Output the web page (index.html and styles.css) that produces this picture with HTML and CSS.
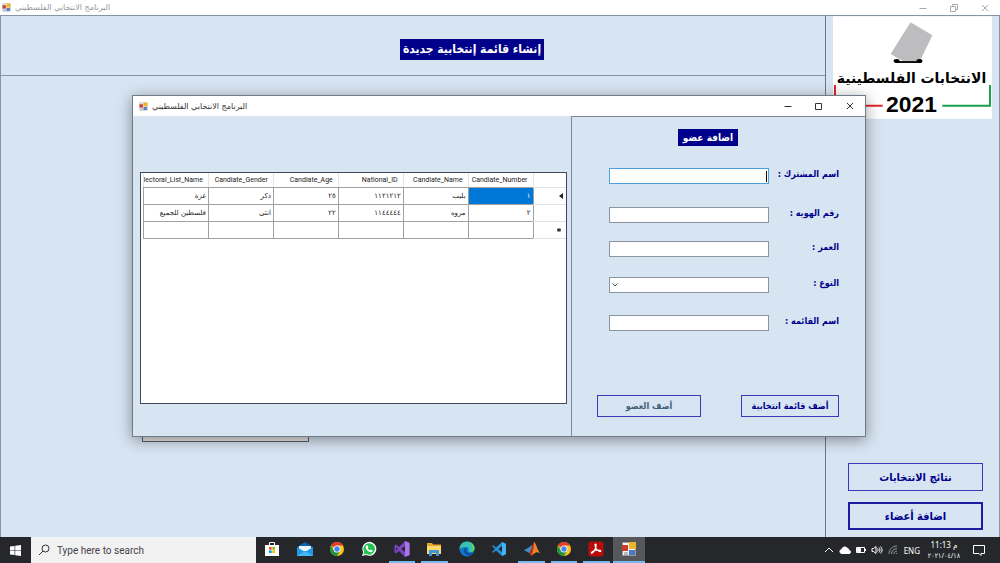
FILE: index.html
```html
<!DOCTYPE html>
<html lang="ar">
<head>
    <meta charset="UTF-8">
    <meta name="viewport" content="width=device-width, initial-scale=1.0">
    <title>البرنامج الانتخابي الفلسطيني</title>
    <link rel="stylesheet" href="styles.css">
</head>
<body>
    <!-- shared icons -->
    <svg class="defs" width="0" height="0">
        <symbol id="app" viewBox="0 0 16 16">
            <path fill="#f6f6f6" stroke="#999" d="M1.5 1.500h13v13h-13z"/>
            <path fill="#c8402c" d="M1 4h6v6H1z"/>
            <path fill="#f0b429" d="M8 1h7v7H8z"/>
            <path fill="#4a78d0" d="M8 9h6v5H8z"/>
            <path fill="#bbb" d="M3 11h4v3H3z"/>
        </symbol>
        <symbol id="min" viewBox="0 0 10 10"><path d="M1.500 5.500h7"/></symbol>
        <symbol id="max" viewBox="0 0 10 10"><path d="M1.500 2.500h6v6h-6z"/></symbol>
        <symbol id="restore" viewBox="0 0 10 10"><path d="M1.500 3.500h5v5h-5zM3.500 3.500v-2h5v5h-2"/></symbol>
        <symbol id="close" viewBox="0 0 10 10"><path d="M2 2l6 6M8 2l-6 6"/></symbol>
        <symbol id="chrome" viewBox="0 0 16 16">
            <circle cx="8" cy="8" r="7" fill="#fbc116"/>
            <path fill="#e33b2e" d="M8 8L1.900 4.500A7 7 0 0 1 14.100 4.500H8z"/>
            <path fill="#229342" d="M1.900 4.500A7 7 0 0 0 8 15l3-5.200L8 8 5 9.800z"/>
            <circle cx="8" cy="8" r="3.500" fill="#fff"/>
            <circle cx="8" cy="8" r="2.700" fill="#4285f4"/>
        </symbol>
    </svg>

    <div class="main-window">
        <header class="titlebar inactive">
            <svg class="app-icon"><use href="#app"/></svg>
            <span class="title" dir="rtl">البرنامج الانتخابي الفلسطيني</span>
            <button class="win-btn" aria-label="Minimize"><svg><use href="#min"/></svg></button>
            <button class="win-btn" aria-label="Restore"><svg><use href="#restore"/></svg></button>
            <button class="win-btn" aria-label="Close"><svg><use href="#close"/></svg></button>
        </header>
        <div class="main-body">
            <main class="workspace">
                <div class="page-header">
                    <h1 class="tag tag-large" dir="rtl">إنشاء قائمة إنتخابية جديدة</h1>
                </div>
                <div class="list-box"></div>
            </main>
            <aside class="sidebar">
                <svg class="logo" viewBox="0 0 160 103">
                    <path fill="#fff" d="M0 0h160v103H0z"/>
                    <path fill="#bdbdbf" d="M78 6l22 13-13 27H72l-14-8z"/>
                    <path stroke="#111" stroke-width="2" d="M63 46h26"/>
                    <ellipse cx="64" cy="45" rx="3" ry="2"/>
                    <ellipse cx="87" cy="45" rx="3" ry="2"/>
                    <text class="logo-name" x="79" y="67" text-anchor="middle">الانتخابات الفلسطينية</text>
                    <text class="logo-year" x="79" y="96" text-anchor="middle">2021</text>
                    <path fill="none" stroke="#e3242b" stroke-width="2" d="M2 69v21h48"/>
                    <path fill="none" stroke="#16a04f" stroke-width="2" d="M110 90h48V69"/>
                </svg>
                <div class="side-actions" dir="rtl">
                    <button class="btn btn-side">نتائج الانتخابات</button>
                    <button class="btn btn-side current">اضافة أعضاء</button>
                </div>
            </aside>
        </div>
    </div>

    <div class="dialog">
        <header class="titlebar">
            <svg class="app-icon"><use href="#app"/></svg>
            <span class="title" dir="rtl">البرنامج الانتخابي الفلسطيني</span>
            <button class="win-btn" aria-label="Minimize"><svg><use href="#min"/></svg></button>
            <button class="win-btn" aria-label="Maximize"><svg><use href="#max"/></svg></button>
            <button class="win-btn" aria-label="Close"><svg><use href="#close"/></svg></button>
        </header>
        <div class="dialog-body">
            <section class="grid-panel">
                <div class="data-grid">
                    <table dir="rtl">
                        <thead>
                            <tr>
                                <th class="row-head"></th>
                                <th>Candiate_Number</th>
                                <th>Candiate_Name</th>
                                <th>National_ID</th>
                                <th>Candiate_Age</th>
                                <th>Candiate_Gender</th>
                                <th>Electoral_List_Name</th>
                            </tr>
                        </thead>
                        <tbody>
                            <tr>
                                <td class="row-head"><svg viewBox="0 0 6 8"><path d="M5 1v6L1 4z"/></svg></td>
                                <td class="selected">١</td>
                                <td>بليب</td>
                                <td>١١٢١٢١٢</td>
                                <td>٢٥</td>
                                <td>ذكر</td>
                                <td>غزة</td>
                            </tr>
                            <tr>
                                <td class="row-head"></td>
                                <td>٢</td>
                                <td>مروه</td>
                                <td>١١٤٤٤٤٤</td>
                                <td>٢٢</td>
                                <td>انثى</td>
                                <td>فلسطين للجميع</td>
                            </tr>
                            <tr>
                                <td class="row-head"><svg class="new-row" viewBox="0 0 6 8"><path d="M3 2v4M1 3l4 2M5 3l-4 2"/></svg></td>
                                <td></td>
                                <td></td>
                                <td></td>
                                <td></td>
                                <td></td>
                                <td></td>
                            </tr>
                        </tbody>
                    </table>
                </div>
            </section>

            <form class="member-form" dir="rtl">
                <h2 class="tag">اضافة عضو</h2>
                <div class="fields">
                    <label for="memberName">اسم المشترك :</label>
                    <div class="control focused"><input type="text" id="memberName"></div>
                    <label for="memberId">رقم الهويه :</label>
                    <div class="control"><input type="text" id="memberId"></div>
                    <label for="memberAge">العمر :</label>
                    <div class="control"><input type="text" id="memberAge"></div>
                    <label for="memberGender">النوع :</label>
                    <div class="control">
                        <select id="memberGender"><option></option></select>
                        <svg class="chevron" viewBox="0 0 6 4"><path d="M.5.5L3 3 5.500.5"/></svg>
                    </div>
                    <label for="listName">اسم القائمه :</label>
                    <div class="control"><input type="text" id="listName"></div>
                </div>
                <div class="form-actions">
                    <button type="button" class="btn">أضف قائمة انتخابية</button>
                    <button type="button" class="btn btn-wide" disabled>أضف العضو</button>
                </div>
            </form>
        </div>
    </div>

    <footer class="taskbar">
        <button class="start" aria-label="Start">
            <svg viewBox="0 0 12 12"><path fill="#fff" d="M0 1.700l5-.7v4.700H0zM5.700.9L12 0v5.700H5.700zM0 6.300h5V11l-5-.7zM5.700 6.300H12V12l-6.300-.9z"/></svg>
        </button>
        <div class="search">
            <svg viewBox="0 0 12 12"><circle cx="7.500" cy="4.500" r="3.500"/><path d="M5 7L1 11"/></svg>
            <input type="text" placeholder="Type here to search" aria-label="Search">
        </div>
        <nav class="apps">
            <button aria-label="Store">
                <svg viewBox="0 0 16 16"><path fill="none" stroke="#fff" d="M5.500 4V1.500h5V4"/><path fill="#fff" d="M1 4h14v11H1z"/><path fill="#f25022" d="M5 6h2.700v2.700H5z"/><path fill="#7fba00" d="M8.300 6H11v2.700H8.300z"/><path fill="#00a4ef" d="M5 9.300h2.700V12H5z"/><path fill="#ffb900" d="M8.300 9.300H11V12H8.300z"/></svg>
            </button>
            <button aria-label="Mail">
                <svg viewBox="0 0 16 16"><path fill="#0a64b4" d="M0 6l8-5 8 5v8H0z"/><path fill="#f2f6fa" d="M2 5h12v5H2z"/><path fill="#1e9be8" d="M0 6l8 5 8-5v9H0z"/><path fill="#46b8f4" d="M0 15l8-5 8 5z"/></svg>
            </button>
            <button aria-label="Chrome"><svg><use href="#chrome"/></svg></button>
            <button aria-label="WhatsApp">
                <svg viewBox="0 0 16 16"><path fill="#fff" d="M1 15l1.200-3.800A7 7 0 1 1 5 14z"/><path fill="#25c052" d="M2.500 13.500l.8-2.400A5.800 5.800 0 1 1 5.300 13z"/><path fill="#fff" d="M5.500 4.500l1-.2.900 2-.7.900c.5 1 1.200 1.700 2.300 2.100l.8-.9 2 1c0 1.500-1.500 2-2.600 1.700C7 10.500 5 8.500 4.700 6.700c-.1-1 .3-1.800.8-2.200z"/></svg>
            </button>
            <button class="open" aria-label="Visual Studio">
                <svg viewBox="0 0 16 16"><path fill="#7a45c0" d="M11 0l4.500 2v12L11 16 5 10l-3 2.500L.5 11.500v-7L2 3.500 5 6zM2 6.300v3.400L3.700 8zM11 5L7.300 8 11 11z"/><path fill="#a675e6" d="M11 0l4.500 2v12L11 16z"/></svg>
            </button>
            <button class="open" aria-label="File Explorer">
                <svg viewBox="0 0 16 16"><path fill="#e8a92b" d="M1 2h5l1 1.500h8V13H1z"/><path fill="#ffd869" d="M1 5h14v8H1z"/><path fill="#3e97d6" d="M3 9h10v6h-3v-3H6v3H3z"/></svg>
            </button>
            <button aria-label="Edge">
                <svg viewBox="0 0 16 16"><circle cx="8" cy="8" r="7.500" fill="#1577c9"/><path fill="#37c3b4" d="M.5 8C.5 3.500 4 .5 8 .5s7.500 3 7.500 6.500c0 2.500-2 4-4 4-1.500 0-2.500-.7-2-1.500 1-1.500-.2-3.500-2.500-3.500C3.500 6 1.500 7 .5 8z"/><path fill="#0c4e9b" d="M5 8c-1 3 2 7 6.500 6.300 1.300-.5 2.500-1.500 3-2.500-4 1.800-8-.3-7.300-4.300C6.300 7 5.300 7.200 5 8z"/><path fill="#62d64e" d="M11 1.200c3 1.200 4.500 3.500 4.500 6-.3 2.500-2 3.800-4 3.800C15 8 13.500 4 11 1.200z"/></svg>
            </button>
            <button aria-label="Visual Studio Code">
                <svg viewBox="0 0 16 16"><path fill="#2490d8" d="M11 1l4 2v10l-4 2-6-5.500L2.200 11.700 1 11l3-3-3-3 1.200-.7L5 6.500zM11 5L7.500 8l3.500 3z"/><path fill="#45b3f3" d="M11 1l4 2v10l-4 2z"/></svg>
            </button>
            <button class="open" aria-label="MATLAB">
                <svg viewBox="0 0 16 16"><path fill="#3b8fc4" d="M0 9l4-2 4-3 1 3-4 5z"/><path fill="#b5321c" d="M5 12c2-1 3-9 5-11 1 0 1 6 0 9l-3 5z"/><path fill="#f08328" d="M10 1c2 1 3 7 6 11-3-1-4-1-5 0l-4 3c2-3 3-9 3-14z"/></svg>
            </button>
            <button class="open" aria-label="Chrome"><svg><use href="#chrome"/></svg></button>
            <button class="open" aria-label="Acrobat Reader">
                <svg viewBox="0 0 16 16"><rect width="15" height="15" x=".5" y=".5" rx="2" fill="#b90d0a"/><path fill="none" stroke="#fff" stroke-width="1.200" d="M7.500 3c1 0 .7 3-.5 5.500S3.500 13 3.300 12s3-2.600 5.500-2.800 4.200.3 3.900 1S9 9.500 8 7.500 6.800 3 7.500 3z"/></svg>
            </button>
            <button class="open active" aria-label="البرنامج الانتخابي"><svg><use href="#app"/></svg></button>
        </nav>
        <div class="tray">
            <svg viewBox="0 0 12 12"><path d="M2 8l4-4 4 4"/></svg>
            <svg viewBox="0 0 12 12"><path fill="#fff" d="M3 9.500a2 2 0 0 1-.2-4A3 3 0 0 1 8 4a2.700 2.700 0 0 1 2 2.500 1.500 1.500 0 0 1 0 3z"/></svg>
            <svg viewBox="0 0 12 12"><path d="M1.500 3.500h8v5h-8zM10.500 5v2"/><path fill="#fff" d="M2.500 4.500h3v3h-3z"/></svg>
            <svg viewBox="0 0 12 12"><path d="M1 4.500h1.500L5 2.500v7L2.500 7.500H1zM6.500 4.500c.7 1 .7 2 0 3M8 3.500c1.300 1.500 1.300 3.500 0 5M9.500 2.500c2 2 2 5 0 7"/></svg>
            <svg class="dim" viewBox="0 0 12 12"><path d="M2 10C2 5.500 5.500 2 10 2M4.500 10c0-3 2.500-5.500 5.500-5.500M7 10c0-1.700 1.300-3 3-3M9 10l1-1"/></svg>
            <span class="lang">ENG</span>
            <div class="clock"><span>11:13 م</span><span class="date">٢٠٢١/٠٤/١٨</span></div>
            <svg class="note" viewBox="0 0 12 12"><path d="M.5 1.500h11v8H8v2l-2-2H.5z"/></svg>
        </div>
    </footer>
</body>
</html>
```
FILE: styles.css
```css
* {
    box-sizing: border-box;
}
body {
    display: flex;
    flex-direction: column;
    height: 100vh;
    margin: 0;
    overflow: hidden;
    font-family: "DejaVu Sans", sans-serif;
    font-size: 8px;
    background-color: #d7e4f2;
}
button {
    padding: 0;
    border: 0;
    background: none;
    font-family: inherit;
}
svg {
    display: block;
    flex: none;
}
.defs {
    position: absolute;
}

/* windows */
.main-window {
    display: flex;
    flex: 1;
    flex-direction: column;
    min-height: 0;
}
.titlebar {
    display: flex;
    flex: none;
    align-items: center;
    height: 20px;
    padding-left: 6px;
    background-color: #fff;
    color: #333;
}
.titlebar.inactive {
    height: 15px;
    padding-left: 2px;
    color: #999;
}
.app-icon {
    width: 9px;
    height: 9px;
}
.title {
    flex: 1;
    margin-left: 4px;
    font-size: 8px;
    direction: ltr;
}
.win-btn {
    display: flex;
    justify-content: center;
    width: 31px;
}
.win-btn svg {
    width: 10px;
    height: 10px;
    fill: none;
    stroke: currentColor;
}
.titlebar .win-btn {
    color: #333;
}
.titlebar.inactive .win-btn {
    color: #aaa;
}
.main-body {
    display: flex;
    flex: 1;
    border: 1px solid #8794a5;
    border-bottom: 0;
}
.workspace {
    flex: 1;
}
.page-header {
    display: flex;
    align-items: center;
    justify-content: center;
    height: 60px;
    padding: 8px 0 0 118px;
    border-bottom: 1px solid #8794a5;
}
.tag {
    margin: 0;
    padding: 0 5px;
    background-color: #00008b;
    color: #fff;
    font-family: "DejaVu Sans Condensed", "DejaVu Sans", sans-serif;
    font-size: 10px;
    line-height: 17px;
}
.tag-large {
    padding: 0 3px;
    font-size: 12px;
    line-height: 21px;
}
.list-box {
    width: 167px;
    height: 266px;
    margin: 100px 0 0 141px;
    border: 1px solid #555f6b;
    background-color: #ebe6e8;
}
.sidebar {
    display: flex;
    flex-direction: column;
    justify-content: space-between;
    width: 174px;
    padding: 0 7px;
    border-left: 1px solid #6b7887;
}
.logo {
    width: 159px;
    height: 103px;
}
.logo-name {
    font-size: 14px;
    font-weight: bold;
}
.logo-year {
    font-family: "Liberation Sans", sans-serif;
    font-size: 23px;
    font-weight: bold;
}
.side-actions {
    display: flex;
    flex-direction: column;
    gap: 11px;
    padding: 0 9px 7px 15px;
}

/* buttons */
.btn {
    width: 98px;
    height: 22px;
    border: 1px solid #3a3ab8;
    color: #00008b;
    font-family: "DejaVu Sans Condensed", "DejaVu Sans", sans-serif;
    font-size: 9px;
    font-weight: bold;
    white-space: nowrap;
}
.btn:disabled {
    color: #3f6079;
}
.btn-wide {
    width: 104px;
}
.btn-side {
    width: 100%;
    height: 28px;
    font-size: 11px;
}
.btn-side.current {
    border: 2px solid #1c1ca0;
}

/* dialog */
.dialog {
    position: absolute;
    top: 95px;
    left: 132px;
    display: flex;
    flex-direction: column;
    width: 734px;
    height: 342px;
    border: 1px solid #6f7b89;
    background-color: #d7e4f2;
    box-shadow: 0 3px 14px rgba(0, 0, 0, 0.4);
}
.dialog-body {
    display: flex;
    flex: 1;
}
.grid-panel {
    flex: 1;
    padding: 56px 4px 32px 7px;
}
.data-grid {
    height: 100%;
    padding-left: 2px;
    border: 1px solid #3f4854;
    background-color: #fff;
}
table {
    width: 100%;
    border-collapse: collapse;
    table-layout: fixed;
    font-size: 7px;
}
th, td {
    height: 17px;
    padding: 0 2px;
    border: 1px solid #a0a0a0;
    overflow: hidden;
    text-align: right;
    white-space: nowrap;
    color: #222;
}
th {
    height: 14px;
    padding: 0 5px 0 0;
    border-color: #e3e3e3;
    border-top: 0;
    border-bottom-color: #a0a0a0;
    font-family: Roboto, sans-serif;
    font-weight: normal;
}
.row-head {
    width: 33px;
    border-right: 0;
    border-left: 0;
    border-color: #e3e3e3;
}
.row-head svg {
    width: 6px;
    height: 8px;
    fill: #222;
}
.row-head .new-row {
    margin-right: 2px;
    stroke: #222;
}
td.selected {
    background-color: #0078d7;
    color: #fff;
}

/* member form */
.member-form {
    display: flex;
    flex-direction: column;
    align-items: center;
    width: 294px;
    padding: 12px 26px 19px 25px;
    border: 1px solid #7b8999;
    border-right: 0;
    border-bottom: 0;
}
.member-form .tag {
    margin-right: 20px;
}
.fields {
    display: grid;
    grid-template-columns: 1fr 160px;
    grid-template-rows: 39px 34px 36px 38px 16px;
    width: 100%;
    margin-top: 22px;
    padding-left: 12px;
}
.fields label {
    color: #00008b;
    font-family: "DejaVu Sans Condensed", "DejaVu Sans", sans-serif;
    font-size: 9px;
    font-weight: bold;
    line-height: 12px;
    white-space: nowrap;
}
.control {
    position: relative;
    height: 16px;
}
.control input,
.control select {
    display: block;
    width: 100%;
    height: 100%;
    padding: 0 2px;
    border: 1px solid #8b94a0;
    border-radius: 0;
    outline: 0;
    background-color: #fff;
    appearance: none;
}
.control.focused input {
    border-color: #4a9fdc;
}
.control.focused::after {
    position: absolute;
    top: 3px;
    right: 2px;
    width: 1px;
    height: 11px;
    background-color: #000;
    content: "";
}
.chevron {
    position: absolute;
    top: 6px;
    left: 3px;
    width: 6px;
    height: 4px;
    fill: none;
    stroke: #555;
}
.form-actions {
    display: flex;
    justify-content: space-between;
    width: 100%;
    margin-top: auto;
}

/* taskbar */
.taskbar {
    display: flex;
    height: 26px;
    background-color: #26272a;
    color: #fff;
    font-family: "Noto Sans", "DejaVu Sans Condensed", sans-serif;
}
.start {
    display: flex;
    align-items: center;
    justify-content: center;
    width: 31px;
}
.start svg {
    width: 11px;
    height: 11px;
}
.search {
    display: flex;
    align-items: center;
    width: 225px;
    padding-left: 7px;
    background-color: #f2f2f3;
}
.search svg {
    width: 12px;
    height: 12px;
    fill: none;
    stroke: #333;
}
.search input {
    flex: 1;
    min-width: 0;
    padding: 0 0 0 7px;
    border: 0;
    background: none;
    font-family: Roboto, sans-serif;
    font-size: 10px;
}
.search input::placeholder {
    color: #444;
}
.apps {
    display: grid;
    grid-template-columns: repeat(12, 1fr);
    width: 389px;
}
.apps button {
    display: flex;
    align-items: center;
    justify-content: center;
    margin: 0 3px;
    border-bottom: 2px solid transparent;
}
.apps button svg {
    width: 16px;
    height: 16px;
}
.apps .open {
    border-bottom-color: #76b9ed;
}
.apps .active {
    margin: 0;
    background-color: #56575a;
}
.tray {
    display: flex;
    align-items: center;
    gap: 4px;
    margin-left: auto;
    padding-right: 15px;
}
.tray svg {
    width: 12px;
    height: 12px;
    fill: none;
    stroke: #fff;
}
.tray .dim {
    stroke: #999;
}
.lang {
    margin-left: 1px;
    font-size: 8px;
}
.clock {
    display: flex;
    flex-direction: column;
    align-items: center;
    width: 40px;
    font-size: 8px;
    line-height: 11px;
}
.date {
    font-size: 7px;
}
.tray .note {
    margin-left: 5px;
}
```
